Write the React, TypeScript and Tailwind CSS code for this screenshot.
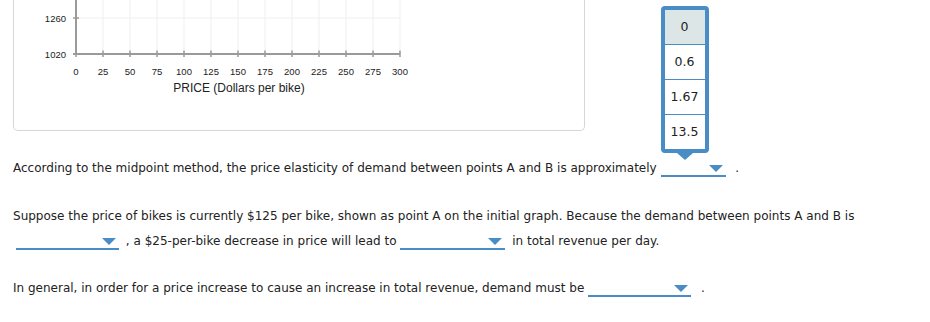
const xTicks = [0, 25, 50, 75, 100, 125, 150, 175, 200, 225, 250, 275, 300];
const options = ["0", "0.6", "1.67", "13.5"];

function Chart() {
  // coordinates are relative to the card (card left edge at page x=13)
  const x0 = 62;
  const step = 27;
  const axisY = 54;
  return (
    <svg width="571" height="130" className="block">
      {xTicks.map((t, i) => (
        <line key={"g" + t} x1={x0 + i * step} y1={0} x2={x0 + i * step} y2={axisY} stroke="#efefef" strokeWidth="1" />
      ))}
      <line x1={x0} y1={18} x2={x0 + 12 * step} y2={18} stroke="#efefef" strokeWidth="1" />
      <line x1={x0} y1={0} x2={x0} y2={axisY} stroke="#9a9a9a" strokeWidth="2" />
      <line x1={x0 - 3} y1={18} x2={x0 + 3} y2={18} stroke="#9a9a9a" strokeWidth="1.5" />
      <line x1={x0 - 3} y1={axisY} x2={x0 + 12 * step} y2={axisY} stroke="#9a9a9a" strokeWidth="2" />
      {xTicks.map((t, i) => (
        <line key={"t" + t} x1={x0 + i * step} y1={axisY - 3.5} x2={x0 + i * step} y2={axisY + 3} stroke="#9a9a9a" strokeWidth="1.5" />
      ))}
      <g fontFamily="'Liberation Sans', Arial, sans-serif" fontSize="9.5" fill="#222">
        <text x={52} y={21.5} textAnchor="end">1260</text>
        <text x={52} y={57.5} textAnchor="end">1020</text>
        {xTicks.map((t, i) => (
          <text key={"l" + t} x={x0 + i * step} y={74.5} textAnchor="middle">{t}</text>
        ))}
      </g>
      <text x={225} y={92} textAnchor="middle" fontFamily="'Liberation Sans', Arial, sans-serif" fontSize="12" fill="#222">
        PRICE (Dollars per bike)
      </text>
    </svg>
  );
}

function Select({ width, open }: { width: string; open?: boolean }) {
  return (
    <span className={`relative inline-block h-[16px] align-[-5px] border-b-2 border-[#4a8cc6] ${width}`}>
      <span className="absolute right-[3px] top-[4px] h-0 w-0 border-x-[7px] border-t-[7px] border-x-transparent border-t-[#4a8cc6]" />
      {open && (
        <span className="absolute left-0 bottom-[15px] z-10 block w-[48px]">
          <span className="block rounded-[4px] border-4 border-[#4a8cc6] bg-[#4a8cc6]">
            {options.map((o, i) => (
              <span
                key={o}
                className={`block h-[34px] ${i > 0 ? "mt-px" : ""} ${i === 0 ? "bg-[#dde6e6]" : "bg-white"} text-center leading-[34px] text-[12.5px]`}
              >
                {o}
              </span>
            ))}
          </span>
          <span className="mx-auto block h-0 w-0 border-x-[8px] border-t-[7px] border-x-transparent border-t-[#4a8cc6]" />
        </span>
      )}
    </span>
  );
}

export default function App() {
  return (
    <div className="w-[930px] h-[322px] overflow-hidden bg-white px-[13px] font-['DejaVu_Sans',Verdana,sans-serif] text-[12px] text-[#222]">
      <div className="w-[572px] h-[131px] rounded-b-[5px] border-x border-b border-[#d6d6d6]">
        <Chart />
      </div>

      <p className="mt-[25px] leading-[25px]">
        According to the midpoint method, the price elasticity of demand between points A and B is approximately{" "}
        <Select width="w-[65px]" open /> <span className="ml-[6px]">.</span>
      </p>

      <p className="mt-[23px] leading-[25px] tracking-[0.01px]">
        Suppose the price of bikes is currently $125 per bike, shown as point A on the initial graph. Because the demand between points A and B is
        <br />
        <span className="ml-[3px]" />
        <Select width="w-[103px]" /> <span className="ml-[3px]">, a $25-per-bike decrease in price will lead to</span>{" "}
        <Select width="w-[105px]" /> <span className="ml-[3px]">in total revenue per day.</span>
      </p>

      <p className="mt-[22px] leading-[25px]">
        In general, in order for a price increase to cause an increase in total revenue, demand must be{" "}
        <Select width="w-[103px]" /> <span className="ml-[6px]">.</span>
      </p>
    </div>
  );
}
